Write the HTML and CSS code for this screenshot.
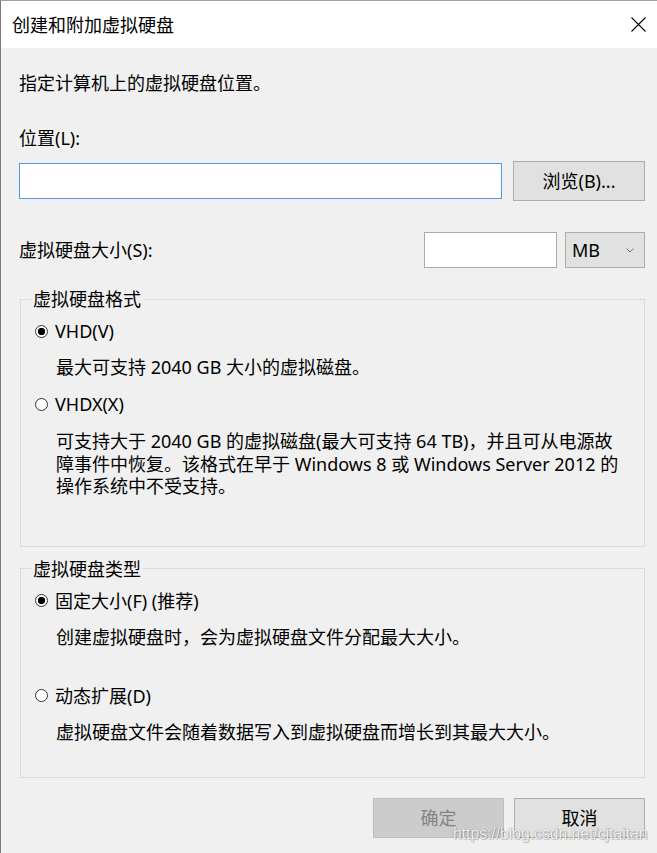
FILE: index.html
```html
<!DOCTYPE html>
<html lang="zh-CN">
<head>
<meta charset="utf-8">
<title>创建和附加虚拟硬盘</title>
<link rel="stylesheet" href="styles.css">
</head>
<body>
<div class="window">
  <div class="titlebar">
    <span class="title">创建和附加虚拟硬盘</span>
    <svg class="close" width="15" height="15" viewBox="0 0 15 15" aria-label="关闭">
      <path d="M0.5 0.5 L14.5 14.5 M14.5 0.5 L0.5 14.5" stroke="#000" stroke-width="1.1" fill="none"/>
    </svg>
  </div>
  <div class="content">
    <p class="intro">指定计算机上的虚拟硬盘位置。</p>
    <label class="field-label">位置(L):</label>
    <div class="path-row">
      <input class="textbox textbox-focus path-input" type="text">
      <button class="btn browse">浏览(B)...</button>
    </div>
    <div class="size-row">
      <label class="size-label">虚拟硬盘大小(S):</label>
      <input class="textbox size-input" type="text">
      <div class="select">
        <span>MB</span>
        <svg class="chevron" width="8" height="5" viewBox="0 0 8 5"><path d="M0.5 0.5 L4 4 L7.5 0.5" stroke="#6d6d6d" stroke-width="1" fill="none"/></svg>
      </div>
    </div>
    <fieldset class="group group-format">
      <legend>虚拟硬盘格式</legend>
      <label class="option first"><span class="radio checked"></span>VHD(V)</label>
      <p class="desc">最大可支持 2040 GB 大小的虚拟磁盘。</p>
      <label class="option"><span class="radio"></span>VHDX(X)</label>
      <p class="desc para">可支持大于 2040 GB 的虚拟磁盘(最大可支持 64 TB)，并且可从电源故<br>障事件中恢复。该格式在早于 Windows 8 或 Windows Server 2012 的<br>操作系统中不受支持。</p>
    </fieldset>
    <fieldset class="group group-type">
      <legend>虚拟硬盘类型</legend>
      <label class="option first"><span class="radio checked"></span>固定大小(F) (推荐)</label>
      <p class="desc">创建虚拟硬盘时，会为虚拟硬盘文件分配最大大小。</p>
      <label class="option far"><span class="radio"></span>动态扩展(D)</label>
      <p class="desc">虚拟硬盘文件会随着数据写入到虚拟硬盘而增长到其最大大小。</p>
    </fieldset>
    <div class="actions">
      <button class="btn disabled">确定</button>
      <button class="btn">取消</button>
    </div>
  </div>
  <div class="watermark">https://blog.csdn.net/cjtaitan</div>
</div>
</body>
</html>
```

FILE: styles.css
```css
html, body {
  margin: 0;
  padding: 0;
  background: #f0f0f0;
}

.window {
  position: relative;
  width: 657px;
  height: 853px;
  box-sizing: border-box;
  border-left: 1px solid #7a7a7a;
  border-top: 1px solid #a0a0a0;
  background: #f0f0f0;
  font-family: "Noto Sans", "Noto Sans CJK SC", sans-serif;
  font-size: 18px;
  color: #000;
  overflow: hidden;
}

.titlebar {
  height: 47px;
  background: #fff;
  display: flex;
  align-items: center;
  justify-content: space-between;
  padding: 0 11px 0 11px;
}

.title {
  line-height: 24px;
}

.close {
  display: block;
}

.content {
  padding: 23px 12px 0 18px;
}

.intro {
  margin: 0;
  line-height: 24px;
}

.field-label {
  display: block;
  margin-top: 31px;
  line-height: 24px;
}

.path-row {
  margin-top: 11px;
  height: 40px;
  display: flex;
  align-items: center;
  gap: 11px;
}

.textbox {
  box-sizing: border-box;
  height: 36px;
  margin: 0;
  background: #fff;
  border: 1px solid #a9a9a9;
  outline: none;
  font: inherit;
  padding: 0 4px;
}

.textbox-focus {
  border-color: #4f9be6;
}

.path-input {
  flex: 1;
  min-width: 0;
}

.btn {
  box-sizing: border-box;
  width: 131px;
  height: 40px;
  margin: 0;
  padding: 0;
  background: #e1e1e1;
  border: 1px solid #adadad;
  font: inherit;
  color: #000;
  line-height: 18px;
}

.browse {
  width: 132px;
}

.btn.disabled {
  background: #cccccc;
  border-color: #bfbfbf;
  color: #838383;
}

.size-row {
  margin-top: 31px;
  height: 36px;
  display: flex;
  align-items: center;
  gap: 8px;
}

.size-label {
  flex: 1;
  line-height: 24px;
}

.size-input {
  width: 133px;
}

.select {
  box-sizing: border-box;
  width: 80px;
  height: 36px;
  background: #e1e1e1;
  border: 1px solid #adadad;
  display: flex;
  align-items: center;
  padding: 0 10px 0 6px;
  line-height: 24px;
}

.chevron {
  margin-left: auto;
  display: block;
}

.group {
  margin: 19px 0 0 1px;
  padding: 0 0 48px 10px;
  border: 1px solid #dadada;
  min-width: 0;
}

.group legend {
  padding: 0 2px;
  line-height: 24px;
}

.group-type {
  margin-top: 10px;
  padding-bottom: 33px;
}

.option {
  display: flex;
  align-items: center;
  gap: 7px;
  margin-top: 13px;
  padding-left: 4px;
  line-height: 24px;
}

.option.first {
  margin-top: 8px;
}

.option.far {
  margin-top: 35px;
}

.radio {
  box-sizing: border-box;
  width: 13px;
  height: 13px;
  border: 1px solid #333;
  border-radius: 50%;
  background: #fff;
  flex: none;
}

.radio.checked {
  background: radial-gradient(circle, #000 0 3.4px, #fff 4px);
}

.desc {
  margin: 12px 0 0 0;
  padding-left: 25px;
  line-height: 24px;
}

.desc.para {
  margin-top: 14px;
  line-height: 22.5px;
  white-space: nowrap;
}

.actions {
  margin-top: 20px;
  display: flex;
  justify-content: flex-end;
  gap: 10px;
}

.watermark {
  position: absolute;
  left: 452px;
  top: 826px;
  font-family: "Liberation Sans", Arial, sans-serif;
  font-size: 15.7px;
  line-height: 13px;
  color: rgba(255, 255, 255, 0.92);
  text-shadow: 0 0 1px rgba(0, 0, 0, 0.45), 1px 1px 1px rgba(0, 0, 0, 0.2);
  white-space: nowrap;
}
```
